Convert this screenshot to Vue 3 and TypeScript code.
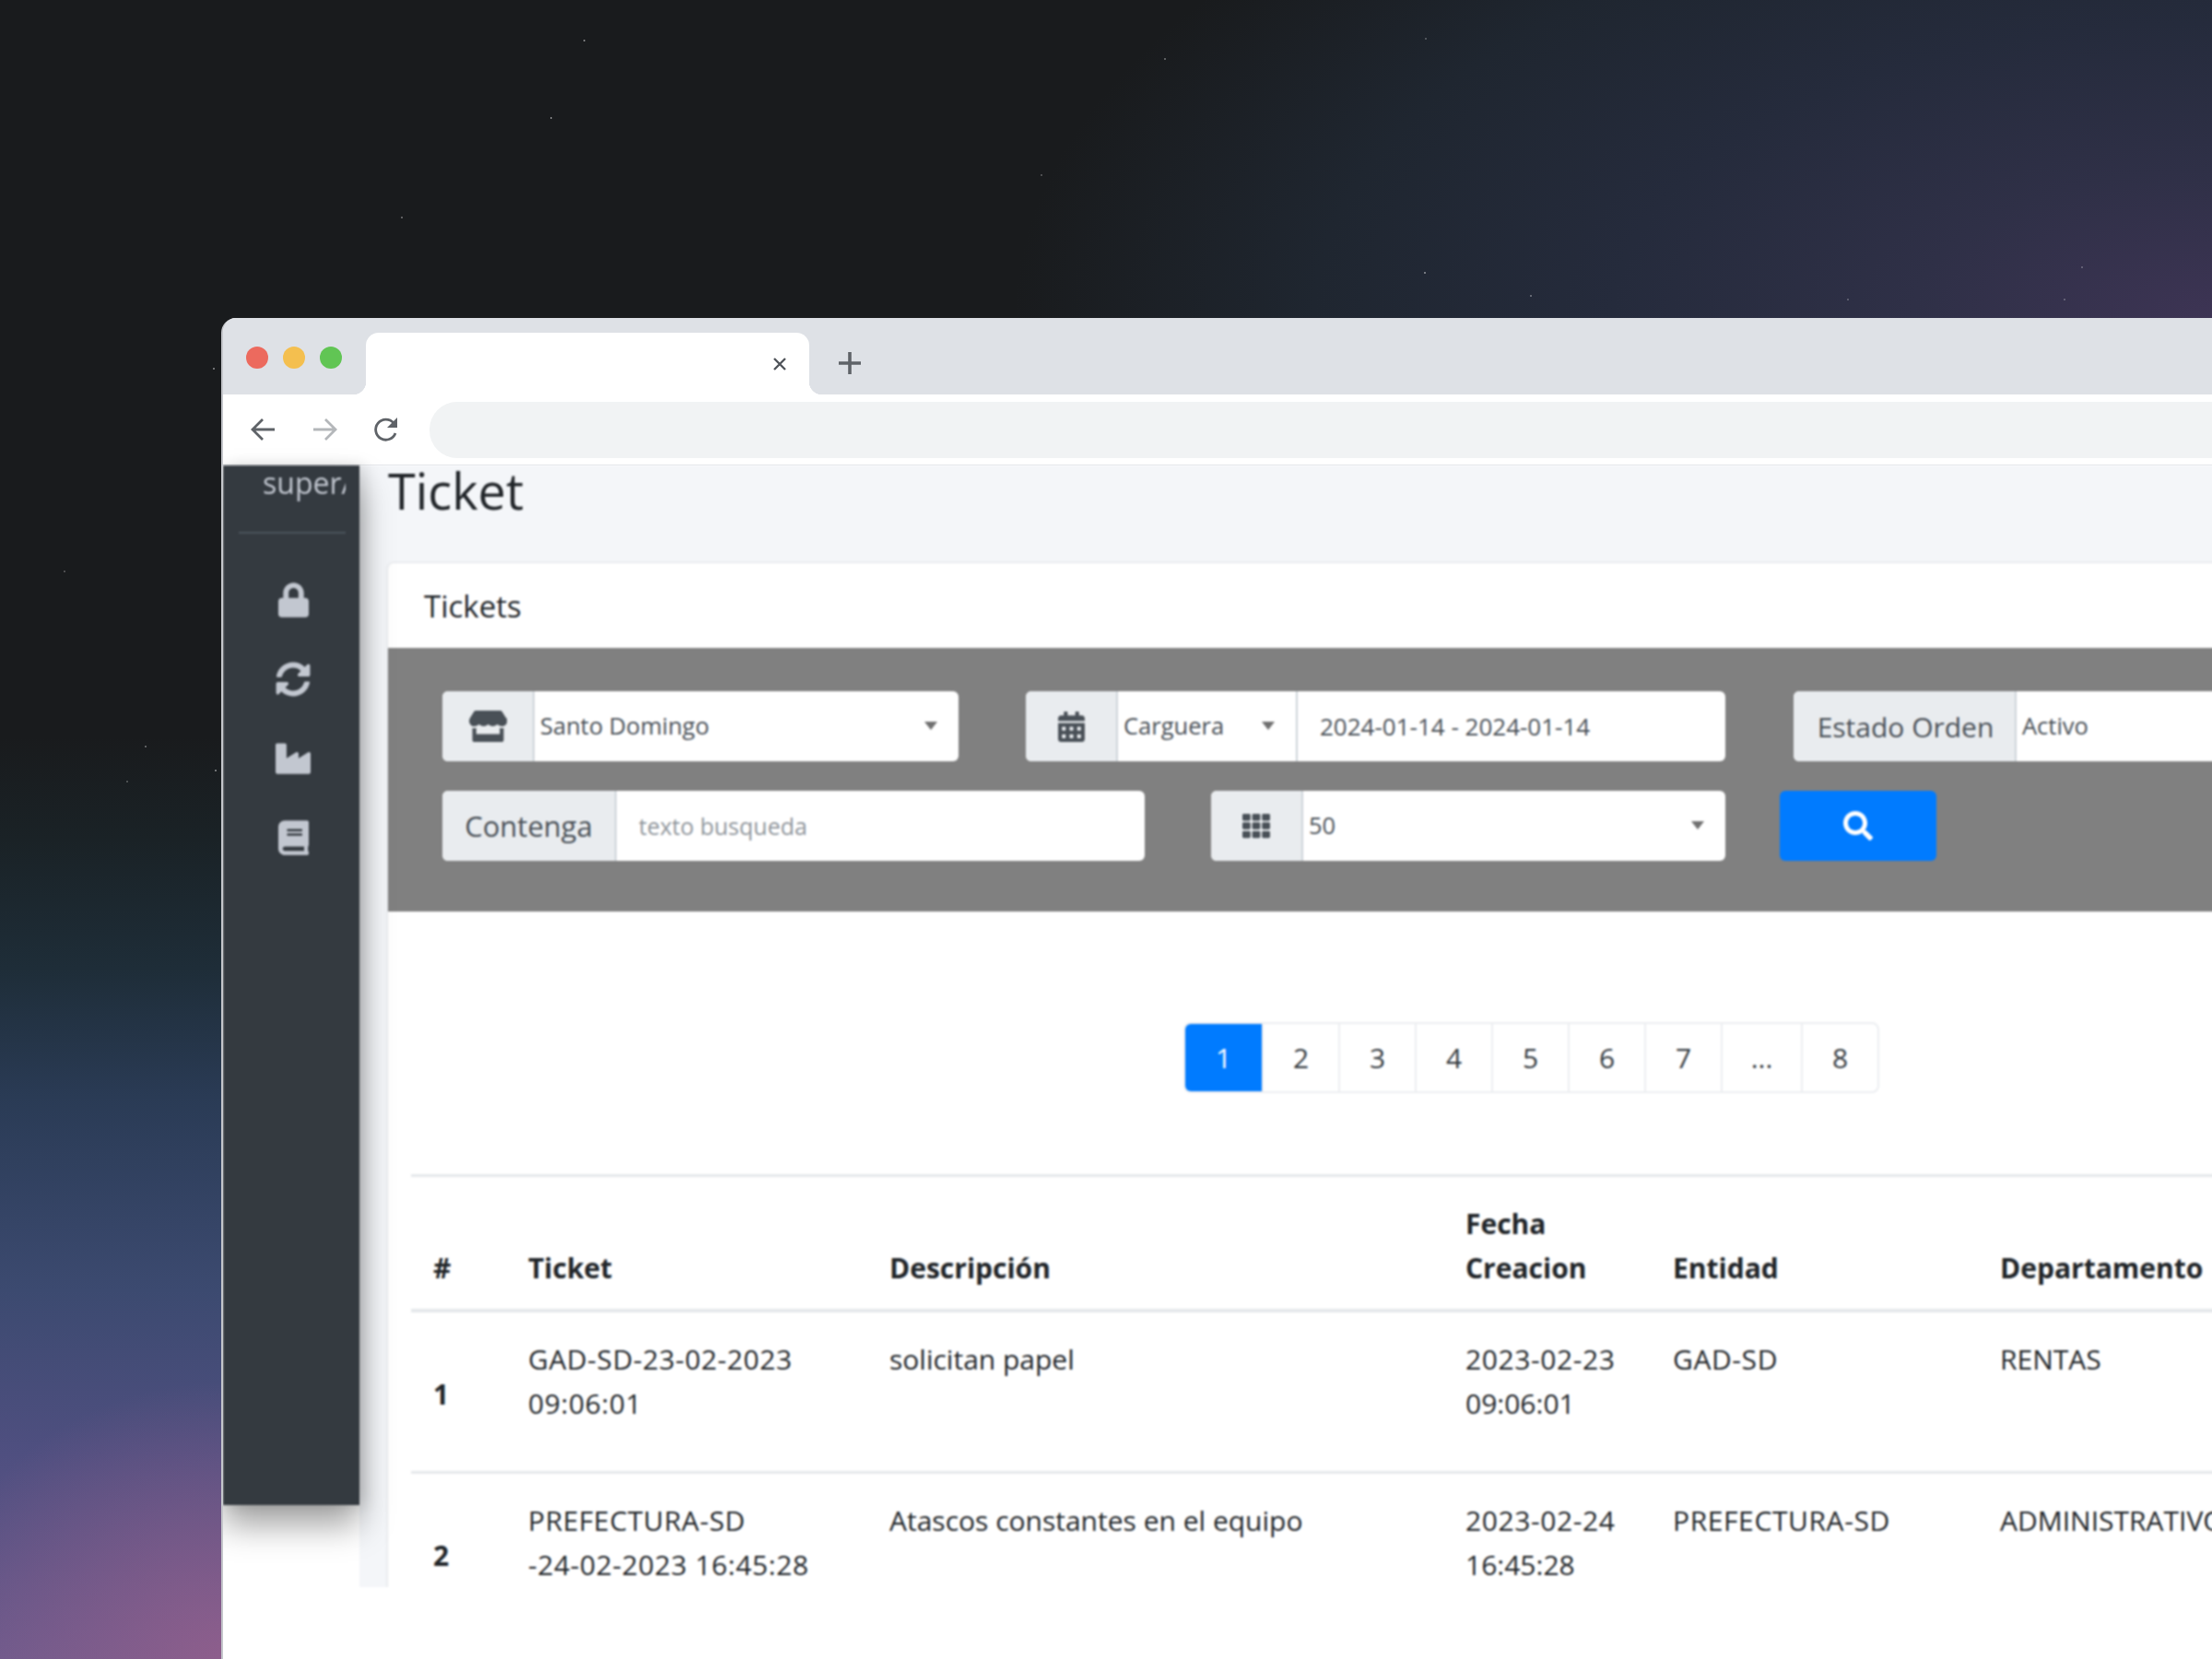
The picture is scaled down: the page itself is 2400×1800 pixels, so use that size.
<script setup lang="ts">
interface Star { x: number; y: number; o: number }

const stars: Star[] = [
  { x: 634, y: 44, o: 0.5 }, { x: 1264, y: 64, o: 0.4 }, { x: 598, y: 128, o: 0.5 },
  { x: 436, y: 236, o: 0.4 }, { x: 1546, y: 296, o: 0.5 }, { x: 1130, y: 190, o: 0.3 },
  { x: 232, y: 400, o: 0.5 }, { x: 158, y: 810, o: 0.4 }, { x: 234, y: 836, o: 0.5 },
  { x: 138, y: 848, o: 0.3 }, { x: 70, y: 620, o: 0.3 }, { x: 1547, y: 42, o: 0.3 },
  { x: 1661, y: 321, o: 0.4 }, { x: 2005, y: 325, o: 0.3 },
  { x: 2240, y: 325, o: 0.3 }, { x: 2259, y: 290, o: 0.3 }
]

const pages = ['1', '2', '3', '4', '5', '6', '7', '...', '8']

const tickets = [
  {
    id: 1,
    ticket: ['GAD-SD-23-02-2023', '09:06:01'],
    descripcion: 'solicitan papel',
    fecha: ['2023-02-23', '09:06:01'],
    entidad: 'GAD-SD',
    departamento: 'RENTAS'
  },
  {
    id: 2,
    ticket: ['PREFECTURA-SD', '-24-02-2023 16:45:28'],
    descripcion: 'Atascos constantes en el equipo',
    fecha: ['2023-02-24', '16:45:28'],
    entidad: 'PREFECTURA-SD',
    departamento: 'ADMINISTRATIVO'
  }
]
</script>

<template>
  <div class="desktop">
    <svg class="stars" width="2400" height="1800">
      <circle v-for="(s, i) in stars" :key="i" :cx="s.x" :cy="s.y" r="1" fill="#fff" :opacity="s.o" />
    </svg>

    <div class="window">
      <div class="chrome">
        <div class="tabbar">
          <div class="lights">
            <span class="light red"></span>
            <span class="light yellow"></span>
            <span class="light green"></span>
          </div>
          <div class="tab">
            <svg class="tab-close" width="16" height="16" viewBox="0 0 16 16">
              <path d="M2 2l12 12M14 2L2 14" stroke="#50545a" stroke-width="2.4" fill="none" />
            </svg>
          </div>
          <svg class="tab-new" width="26" height="26" viewBox="0 0 26 26">
            <path d="M13 1v24M1 13h24" stroke="#5f6368" stroke-width="3.6" fill="none" />
          </svg>
        </div>

        <div class="toolbar">
          <svg class="nav" width="30" height="30" viewBox="0 0 30 30">
            <path d="M27 15H4M14 4L3 15l11 11" stroke="#5f6368" stroke-width="2.8" fill="none" />
          </svg>
          <svg class="nav" width="30" height="30" viewBox="0 0 30 30">
            <path d="M3 15h23M16 4l11 11-11 11" stroke="#b4b7ba" stroke-width="2.8" fill="none" />
          </svg>
          <svg class="nav" width="30" height="30" viewBox="0 0 30 30">
            <path d="M25 19a11 11 0 1 1-2-11" stroke="#5f6368" stroke-width="2.8" fill="none" />
            <path d="M27 2v11H16z" fill="#5f6368" />
          </svg>
          <div class="address"></div>
        </div>
      </div>

      <div class="body">
        <aside class="sidebar">
          <div class="user">superAdmin</div>
          <div class="side-line"></div>
          <nav class="side-nav">
            <svg viewBox="0 0 448 512" width="33" height="38"><path d="M400 224h-24v-72C376 68.2 307.8 0 224 0S72 68.2 72 152v72H48c-26.5 0-48 21.5-48 48v192c0 26.5 21.5 48 48 48h352c26.5 0 48-21.5 48-48V272c0-26.5-21.5-48-48-48zm-104 0H152v-72c0-39.7 32.3-72 72-72s72 32.3 72 72v72z" /></svg>
            <svg viewBox="0 0 512 512" width="38" height="38"><path d="M370.72 133.28C339.458 104.008 298.888 87.962 255.848 88c-77.458.068-144.328 53.178-162.791 126.85-1.344 5.363-6.122 9.15-11.651 9.15H24.103c-7.498 0-13.194-6.807-11.807-14.176C33.933 94.924 134.813 8 256 8c66.448 0 126.791 26.136 171.315 68.685L463.03 40.97C478.149 25.851 504 36.559 504 57.941V192c0 13.255-10.745 24-24 24H345.941c-21.382 0-32.09-25.851-16.971-40.971l41.75-41.749zM32 296h134.059c21.382 0 32.09 25.851 16.971 40.971l-41.75 41.75c31.262 29.273 71.835 45.319 114.876 45.28 77.418-.07 144.315-53.144 162.787-126.849 1.344-5.363 6.122-9.15 11.651-9.15h57.304c7.498 0 13.194 6.807 11.807 14.176C478.067 417.076 377.187 504 256 504c-66.448 0-126.791-26.136-171.315-68.685L48.97 471.03C33.851 486.149 8 475.441 8 454.059V320c0-13.255 10.745-24 24-24z" /></svg>
            <svg viewBox="0 0 512 512" width="38" height="38"><path d="M475.115 163.781L336 252.309v-68.28c0-18.916-20.931-30.399-36.885-20.248L160 252.309V56c0-13.255-10.745-24-24-24H24C10.745 32 0 42.745 0 56v400c0 13.255 10.745 24 24 24h464c13.255 0 24-10.745 24-24V184.029c0-18.917-20.931-30.399-36.885-20.248z" /></svg>
            <svg viewBox="0 0 448 512" width="33" height="38"><path d="M448 360V24c0-13.3-10.7-24-24-24H96C43 0 0 43 0 96v320c0 53 43 96 96 96h328c13.3 0 24-10.7 24-24v-16c0-7.5-3.5-14.3-8.9-18.7-4.2-15.4-4.2-59.3 0-74.7 5.4-4.3 8.9-11.1 8.9-18.6zM128 134c0-3.3 2.7-6 6-6h212c3.3 0 6 2.7 6 6v20c0 3.3-2.7 6-6 6H134c-3.3 0-6-2.7-6-6v-20zm0 64c0-3.3 2.7-6 6-6h212c3.3 0 6 2.7 6 6v20c0 3.3-2.7 6-6 6H134c-3.3 0-6-2.7-6-6v-20zm253.4 250H96c-17.7 0-32-14.3-32-32 0-17.6 14.4-32 32-32h285.4c-1.9 17.1-1.9 46.9 0 64z" /></svg>
          </nav>
        </aside>

        <main class="main">
          <h1 class="title">Ticket</h1>

          <section class="card">
            <div class="card-head">Tickets</div>

            <div class="filters">
              <div class="filter-row">
                <div class="group g-store">
                  <span class="addon icon-addon">
                    <svg viewBox="0 0 616 512" width="41" height="34"><path d="M602 118.6L537.1 15C531.3 5.7 521 0 510 0H106C95 0 84.7 5.7 78.9 15L14 118.6c-33.9 54.1-3.9 129.3 59.4 137.9 4.6.6 9.2.9 13.7.9 29.9 0 56.4-13.2 74.6-33.5 18.2 20.3 44.8 33.5 74.6 33.5 29.9 0 56.5-13.2 74.6-33.5 18.2 20.3 44.8 33.5 74.6 33.5 29.9 0 56.4-13.2 74.6-33.5 18.3 20.3 44.7 33.5 74.6 33.5 4.6 0 9.1-.3 13.7-.9 63.5-8.5 93.6-83.7 59.6-137.9zM529.5 288c-10 0-19.9-1.5-29.5-3.8V384H116v-99.8c-9.6 2.2-19.5 3.8-29.5 3.8-6 0-12.1-.4-18-1.2-5.6-.8-11.1-2.1-16.4-3.6V480c0 17.7 14.3 32 32 32h448c17.7 0 32-14.3 32-32V283.2c-5.4 1.6-10.8 2.9-16.4 3.6-6.1.8-12.1 1.2-18.2 1.2z" /></svg>
                  </span>
                  <span class="select">Santo Domingo<i class="caret"></i></span>
                </div>

                <div class="group g-date">
                  <span class="addon icon-addon">
                    <svg viewBox="0 0 448 512" width="29" height="33"><path d="M0 464c0 26.5 21.5 48 48 48h352c26.5 0 48-21.5 48-48V192H0v272zm320-196c0-6.6 5.4-12 12-12h40c6.6 0 12 5.4 12 12v40c0 6.6-5.4 12-12 12h-40c-6.6 0-12-5.4-12-12v-40zm0 128c0-6.6 5.4-12 12-12h40c6.6 0 12 5.4 12 12v40c0 6.6-5.4 12-12 12h-40c-6.6 0-12-5.4-12-12v-40zM192 268c0-6.6 5.4-12 12-12h40c6.6 0 12 5.4 12 12v40c0 6.6-5.4 12-12 12h-40c-6.6 0-12-5.4-12-12v-40zm0 128c0-6.6 5.4-12 12-12h40c6.6 0 12 5.4 12 12v40c0 6.6-5.4 12-12 12h-40c-6.6 0-12-5.4-12-12v-40zM64 268c0-6.6 5.4-12 12-12h40c6.6 0 12 5.4 12 12v40c0 6.6-5.4 12-12 12H76c-6.6 0-12-5.4-12-12v-40zm0 128c0-6.6 5.4-12 12-12h40c6.6 0 12 5.4 12 12v40c0 6.6-5.4 12-12 12H76c-6.6 0-12-5.4-12-12v-40zM400 64h-48V16c0-8.8-7.2-16-16-16h-32c-8.8 0-16 7.2-16 16v48H160V16c0-8.8-7.2-16-16-16h-32c-8.8 0-16 7.2-16 16v48H48C21.5 64 0 85.5 0 112v48h448v-48c0-26.5-21.5-48-48-48z" /></svg>
                  </span>
                  <span class="select s-carguera">Carguera<i class="caret"></i></span>
                  <span class="date-input">2024-01-14 - 2024-01-14</span>
                </div>

                <div class="group g-estado">
                  <span class="addon text-addon">Estado Orden</span>
                  <span class="select">Activo</span>
                </div>
              </div>

              <div class="filter-row">
                <div class="group g-contenga">
                  <span class="addon text-addon">Contenga</span>
                  <span class="text-input">texto busqueda</span>
                </div>

                <div class="group g-size">
                  <span class="addon icon-addon">
                    <svg viewBox="0 0 512 512" width="30" height="30"><path d="M149.333 56v80c0 13.255-10.745 24-24 24H24c-13.255 0-24-10.745-24-24V56c0-13.255 10.745-24 24-24h101.333c13.255 0 24 10.745 24 24zm181.334 240v-80c0-13.255-10.745-24-24-24H205.333c-13.255 0-24 10.745-24 24v80c0 13.255 10.745 24 24 24h101.333c13.256 0 24.001-10.745 24.001-24zm32-240v80c0 13.255 10.745 24 24 24H488c13.255 0 24-10.745 24-24V56c0-13.255-10.745-24-24-24H386.667c-13.255 0-24 10.745-24 24zm-32 80V56c0-13.255-10.745-24-24-24H205.333c-13.255 0-24 10.745-24 24v80c0 13.255 10.745 24 24 24h101.333c13.256 0 24.001-10.745 24.001-24zm-205.334 56H24c-13.255 0-24 10.745-24 24v80c0 13.255 10.745 24 24 24h101.333c13.255 0 24-10.745 24-24v-80c0-13.255-10.745-24-24-24zM0 376v80c0 13.255 10.745 24 24 24h101.333c13.255 0 24-10.745 24-24v-80c0-13.255-10.745-24-24-24H24c-13.255 0-24 10.745-24 24zm386.667-56H488c13.255 0 24-10.745 24-24v-80c0-13.255-10.745-24-24-24H386.667c-13.255 0-24 10.745-24 24v80c0 13.255 10.745 24 24 24zm0 160H488c13.255 0 24-10.745 24-24v-80c0-13.255-10.745-24-24-24H386.667c-13.255 0-24 10.745-24 24v80c0 13.255 10.745 24 24 24zM181.333 376v80c0 13.255 10.745 24 24 24h101.333c13.255 0 24-10.745 24-24v-80c0-13.255-10.745-24-24-24H205.333c-13.255 0-24 10.745-24 24z" /></svg>
                  </span>
                  <span class="select">50<i class="caret"></i></span>
                </div>

                <button class="search-btn" type="button">
                  <svg viewBox="0 0 512 512" width="32" height="32"><path d="M505 442.7L405.3 343c-4.5-4.5-10.6-7-17-7H372c27.6-35.3 44-79.7 44-128C416 93.1 322.9 0 208 0S0 93.1 0 208s93.1 208 208 208c48.3 0 92.7-16.4 128-44v16.3c0 6.4 2.5 12.5 7 17l99.7 99.7c9.4 9.4 24.6 9.4 33.9 0l28.3-28.3c9.4-9.4 9.4-24.6.1-34zM208 336c-70.7 0-128-57.2-128-128 0-70.7 57.2-128 128-128 70.7 0 128 57.2 128 128 0 70.7-57.2 128-128 128z" /></svg>
                </button>
              </div>
            </div>

            <div class="pager-wrap">
              <ul class="pager">
                <li v-for="(p, i) in pages" :key="i" :class="{ active: i === 0 }">{{ p }}</li>
              </ul>
            </div>

            <table class="tickets">
              <thead>
                <tr>
                  <th class="c-num">#</th>
                  <th class="c-ticket">Ticket</th>
                  <th class="c-desc">Descripción</th>
                  <th class="c-date">Fecha<br />Creacion</th>
                  <th class="c-ent">Entidad</th>
                  <th class="c-dep">Departamento</th>
                </tr>
              </thead>
              <tbody>
                <tr v-for="t in tickets" :key="t.id">
                  <th class="row-num">{{ t.id }}</th>
                  <td class="wide">{{ t.ticket[0] }}<br />{{ t.ticket[1] }}</td>
                  <td>{{ t.descripcion }}</td>
                  <td><span class="wide">{{ t.fecha[0] }}</span><br />{{ t.fecha[1] }}</td>
                  <td class="wide">{{ t.entidad }}</td>
                  <td class="nowrap">{{ t.departamento }}</td>
                </tr>
              </tbody>
            </table>
          </section>
        </main>
      </div>
    </div>
  </div>
</template>

<style>
html, body {
  margin: 0;
  background: #191b1d;
}
</style>

<style scoped>
.desktop {
  position: relative;
  width: 2400px;
  height: 1800px;
  overflow: hidden;
  padding: 345px 0 0 240px;
  box-sizing: border-box;
  font-family: "Open Sans", "Liberation Sans", sans-serif;
  color: #212529;
  background:
    radial-gradient(320px 300px at 240px 1800px, rgba(150, 95, 140, 0.8), rgba(150, 95, 140, 0) 100%),
    radial-gradient(1300px 640px at 2400px 345px, #3d3454 0, #2f3047 25%, #252b3c 50%, #1f2630 75%, rgba(25, 27, 29, 0) 100%),
    linear-gradient(180deg, #191b1d 0, #191b1d 800px, #1a2226 910px, #1e2d38 1050px, #2a3b55 1190px, #3c4a70 1400px, #4f4f80 1577px, #6a5a8c 1800px);
}

.stars {
  position: absolute;
  left: 0;
  top: 0;
}

.window {
  position: relative;
  width: 2300px;
  height: 1455px;
  background: #fff;
  border-top-left-radius: 16px;
  overflow: hidden;
  border-left: 2px solid #c4c6cb;
  box-sizing: border-box;
}

.chrome {
  filter: blur(0.4px);
}

.tabbar {
  height: 83px;
  background: #dee1e6;
  display: flex;
  align-items: flex-start;
}

.lights {
  display: flex;
  gap: 16px;
  padding: 31px 0 0 25px;
  width: 155px;
  box-sizing: border-box;
}

.light {
  width: 24px;
  height: 24px;
  border-radius: 50%;
}

.red { background: #ec6a5e; }
.yellow { background: #f4bf4f; }
.green { background: #61c554; }

.tab {
  position: relative;
  margin-top: 16px;
  width: 481px;
  height: 67px;
  background: #fff;
  border-radius: 14px 14px 0 0;
  display: flex;
  align-items: center;
  justify-content: flex-end;
  padding-right: 24px;
  box-sizing: border-box;
}

.tab::before,
.tab::after {
  content: "";
  position: absolute;
  bottom: 0;
  width: 14px;
  height: 14px;
}

.tab::before {
  left: -14px;
  background: radial-gradient(circle at 0 0, #dee1e6 14px, #fff 14.5px);
}

.tab::after {
  right: -14px;
  background: radial-gradient(circle at 100% 0, #dee1e6 14px, #fff 14.5px);
}

.tab-new {
  margin: 36px 0 0 31px;
}

.toolbar {
  height: 77px;
  box-sizing: border-box;
  background: #fff;
  border-bottom: 1px solid #dfe1e5;
  display: flex;
  align-items: center;
  gap: 36px;
  padding-left: 29px;
}

.nav {
  flex: none;
}

.nav:nth-child(3) {
  margin-left: 1px;
}

.address {
  flex: 1;
  height: 61px;
  margin-left: -4px;
  background: #f1f3f4;
  border-radius: 30px 0 0 30px;
}

.body {
  display: flex;
  height: 1217px;
  align-items: flex-start;
  filter: blur(0.8px);
}

.sidebar {
  position: relative;
  z-index: 2;
  flex: none;
  width: 148px;
  height: 1128px;
  background: #343a40;
  box-shadow: 0 22px 34px rgba(0, 0, 0, 0.36), 6px 0 16px rgba(0, 0, 0, 0.12);
  overflow: hidden;
}

.user {
  margin-left: 43px;
  width: 90px;
  height: 48px;
  line-height: 38px;
  font-size: 32px;
  color: #c2c7d0;
  white-space: nowrap;
  overflow: hidden;
}

.side-line {
  height: 2px;
  margin: 24px 15px 0 17px;
  background: #4b545c;
}

.side-nav {
  display: flex;
  flex-direction: column;
  align-items: center;
  gap: 48px;
  margin-top: 53px;
  padding-left: 4px;
}

.side-nav svg {
  fill: #c2c7d0;
}

.main {
  flex: 1;
  height: 100%;
  min-width: 0;
  overflow: hidden;
  background: #f4f6f9;
  padding-left: 31px;
}

.title {
  margin: -8px 0 0;
  height: 114px;
  font-size: 54px;
  font-weight: 400;
  line-height: 70px;
}

.card {
  height: 1300px;
  background: #fff;
  box-shadow: 0 0 3px rgba(0, 0, 0, 0.16);
  border-radius: 6px 0 0 0;
}

.card-head {
  height: 92px;
  padding: 2px 0 0 39px;
  line-height: 90px;
  font-size: 33px;
  box-sizing: border-box;
}

.filters {
  height: 286px;
  background: #808080;
  padding: 47px 0 0 59px;
  box-sizing: border-box;
}

.filter-row {
  display: flex;
  margin-bottom: 32px;
}

.group {
  display: flex;
  flex: none;
  height: 76px;
  background: #fff;
  border-radius: 6px;
  overflow: hidden;
}

.g-store { width: 560px; margin-right: 73px; }
.g-date { width: 759px; margin-right: 74px; }
.g-estado { width: 600px; }
.g-contenga { width: 762px; margin-right: 72px; }
.g-size { width: 558px; margin-right: 60px; }

.addon {
  flex: none;
  display: flex;
  align-items: center;
  justify-content: center;
  height: 100%;
  background: #e9ecef;
  color: #495057;
  border-right: 2px solid #ced4da;
  box-sizing: border-box;
}

.icon-addon {
  width: 100px;
}

.icon-addon svg {
  fill: #495057;
}

.text-addon {
  font-size: 31px;
  padding: 0 24px;
}

.g-estado .text-addon { width: 242px; padding: 0 0 0 3px; font-size: 30px; }
.g-contenga .text-addon { width: 189px; padding: 0; }

.select {
  position: relative;
  flex: 1;
  display: flex;
  align-items: center;
  padding-left: 6px;
  font-size: 25.5px;
  color: #495057;
  height: 100%;
  padding-bottom: 2px;
  box-sizing: border-box;
}

.s-carguera {
  flex: none;
  width: 195px;
  border-right: 2px solid #ced4da;
}

.caret {
  position: absolute;
  right: 23px;
  top: 33px;
  width: 0;
  height: 0;
  border-left: 7px solid transparent;
  border-right: 7px solid transparent;
  border-top: 9px solid #707070;
}

.date-input {
  flex: 1;
  display: flex;
  align-items: center;
  padding-left: 24px;
  font-size: 26px;
  color: #495057;
}

.text-input {
  flex: 1;
  display: flex;
  align-items: center;
  padding-left: 24px;
  font-size: 25px;
  color: #8f959b;
}

.search-btn {
  flex: none;
  width: 170px;
  height: 76px;
  margin-left: -1px;
  padding: 0;
  border: 0;
  border-radius: 6px;
  background: #007bff;
  display: flex;
  align-items: center;
  justify-content: center;
}

.search-btn svg {
  fill: #fff;
}

.pager-wrap {
  height: 285px;
  padding: 120px 0 0 863px;
  box-sizing: border-box;
}

.pager {
  display: flex;
  width: max-content;
  margin: 0;
  padding: 0;
  list-style: none;
  font-size: 30px;
  border: 2px solid #eceef1;
  border-radius: 8px;
}

.pager li {
  width: 83px;
  height: 73px;
  line-height: 73px;
  text-align: center;
  border-left: 2px solid #eceef1;
  box-sizing: border-box;
  color: #343a40;
}

.pager li:nth-child(8) {
  width: 87px;
}

.pager li:first-child {
  border-left: 0;
}

.pager li.active {
  background: #007bff;
  color: #fff;
  border-radius: 6px 0 0 6px;
}

.tickets {
  margin-left: 25px;
  width: 2100px;
  table-layout: fixed;
  border-collapse: collapse;
  font-size: 30px;
  line-height: 47.5px;
}

.tickets th,
.tickets td {
  box-sizing: border-box;
  padding: 27px 24px 50px;
  text-align: left;
  vertical-align: top;
}

.tickets thead th {
  padding: 27px 24px 21px;
  font-weight: 700;
  vertical-align: bottom;
  border-top: 3px solid #e5e8eb;
  border-bottom: 4px solid #e5e8eb;
}

.tickets tbody tr {
  border-bottom: 3px solid #e5e8eb;
}

.tickets .row-num {
  font-weight: 700;
  vertical-align: middle;
  padding: 6px 24px 0;
}

.c-num { width: 103px; }
.c-ticket { width: 392px; }
.c-desc { width: 625px; }
.c-date { width: 225px; }
.c-ent { width: 355px; }
.c-dep { width: 400px; }

.wide {
  letter-spacing: 0.6px;
}

.nowrap {
  white-space: nowrap;
}
</style>
